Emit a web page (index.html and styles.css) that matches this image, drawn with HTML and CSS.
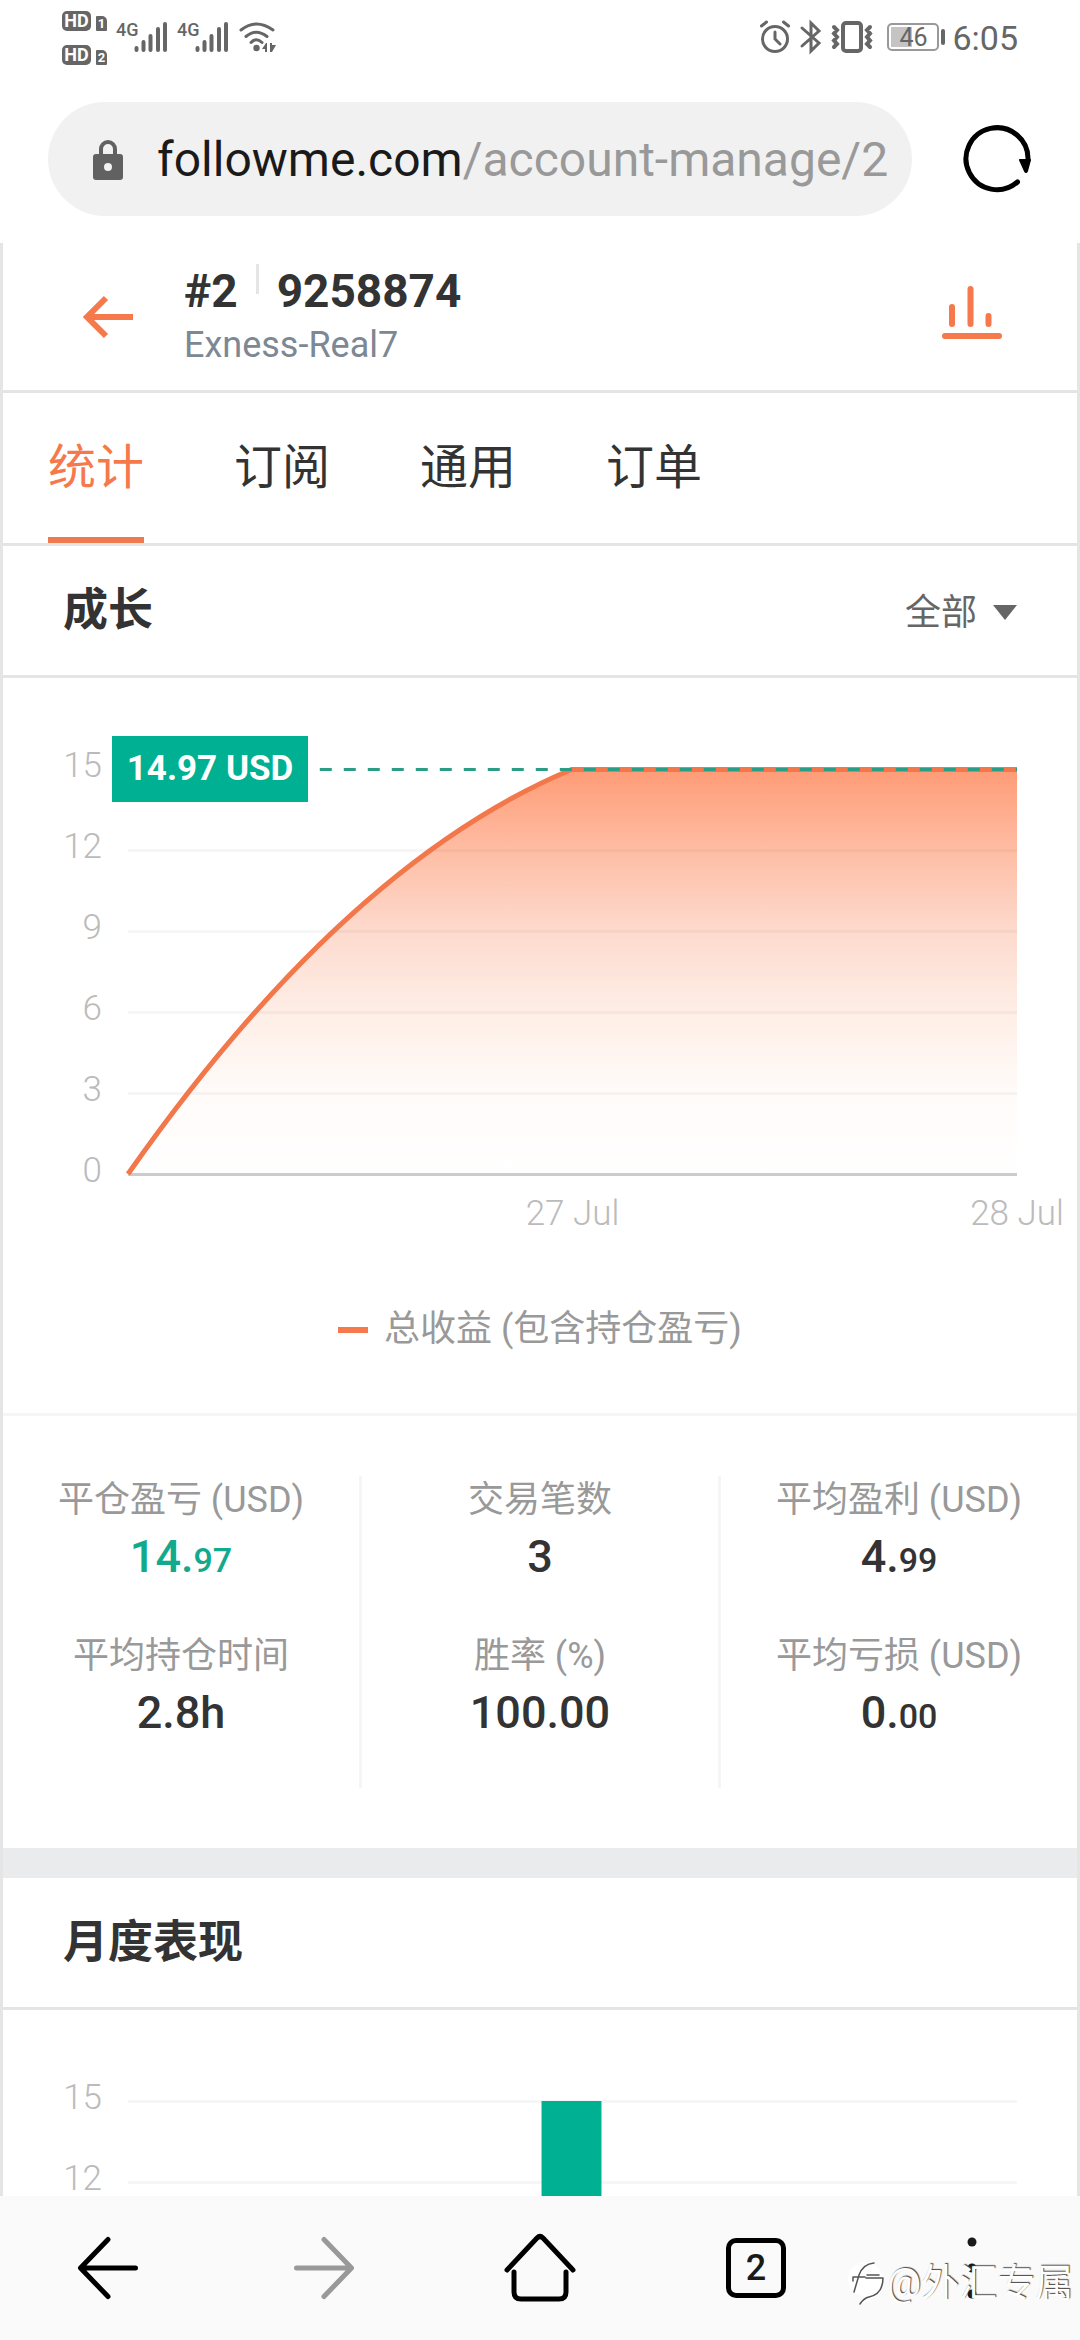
FILE: index.html
```html
<!DOCTYPE html>
<html lang="zh-CN">
<head>
<meta charset="utf-8">
<meta name="viewport" content="width=device-width">
<title>#2 9258874</title>
<link rel="stylesheet" href="styles.css">
</head>
<body>
<header class="status">
  <div class="status-side">
    <div class="hd-list">
      <div class="hd"><b class="hd-tag">HD</b><b class="hd-sim">1</b></div>
      <div class="hd"><b class="hd-tag">HD</b><b class="hd-sim">2</b></div>
    </div>
    <div class="cell"><b class="cell-net">4G</b>
      <svg class="cell-bars" width="34" height="32" viewBox="0 0 34 32"><path d="M2.500 27v2M9.500 21v8M16.500 15v14M24 8v21M31 3v26"/></svg></div>
    <div class="cell"><b class="cell-net">4G</b>
      <svg class="cell-bars" width="34" height="32" viewBox="0 0 34 32"><path d="M2.500 27v2M9.500 21v8M16.500 15v14M24 8v21M31 3v26"/></svg></div>
    <svg class="wifi" width="40" height="32" viewBox="0 0 40 32"><path d="M3 9Q18-3 35 9M8 15.500Q18 7 29 15.500M13 21.500Q18 16 24 21.500"/><circle cx="18.500" cy="27" r="3.200"/><path class="solid" d="M24 28l4-6h1v9h-2v-3zM32 22v9h2l4-7h-4v-2z"/></svg>
  </div>
  <div class="status-side status-right">
    <svg class="line-icon alarm" width="30" height="32" viewBox="0 0 30 32"><circle cx="15" cy="18" r="12.500"/><path d="M15 11v7l5 5M1.500 5l5-4M28.500 5l-5-4"/></svg>
    <svg class="line-icon thin" width="20" height="32" viewBox="0 0 20 32"><path d="M1 7l17 15-8 8V2l8 8L1 25"/></svg>
    <svg class="line-icon" width="40" height="32" viewBox="0 0 40 32"><rect x="11" y="2" width="18" height="28" rx="3"/><path d="M2 6l3 3-3 3.500 3 3.500-3 3.500 3 3.500-3 3M38 6l-3 3 3 3.500-3 3.500 3 3.500-3 3.500 3 3"/></svg>
    <div class="battery"><span>46</span></div>
    <time class="clock">6:05</time>
  </div>
</header>

<div class="toolbar">
  <button class="address" type="button">
    <svg width="30" height="42" viewBox="0 0 30 42"><path d="M3 16h3V11a9 9 0 0 1 18 0v5h3a3 3 0 0 1 3 3v20a3 3 0 0 1-3 3H3a3 3 0 0 1-3-3V19a3 3 0 0 1 3-3zM10 16h10V11a5 5 0 0 0-10 0zM15 25a4 4 0 1 0 0 8 4 4 0 1 0 0-8z" fill="#616161" fill-rule="evenodd"/></svg>
    <span class="url"><span class="host">followme.com</span>/account-manage/2</span>
  </button>
  <button class="icon-button" type="button" aria-label="刷新">
    <svg width="68" height="68" viewBox="0 0 68 68"><path d="M54.500 57A31 31 0 1 1 65 35" fill="none" stroke="#000" stroke-width="5" stroke-linecap="round"/><path d="M57 35h10l-3 11q-1 2-2 0z" stroke="#000" stroke-width="2" stroke-linejoin="round"/></svg>
  </button>
</div>

<main class="page">
  <div class="account">
    <button class="icon-button" type="button" aria-label="返回">
      <svg width="50" height="42" viewBox="0 0 50 42"><path d="M49 21H4M22 2L3 21l19 19" fill="none" stroke="#f5794a" stroke-width="6"/></svg>
    </button>
    <div class="account-name">
      <h1><span>#2</span><i class="rule"></i><span>9258874</span></h1>
      <p>Exness-Real7</p>
    </div>
    <button class="icon-button" type="button" aria-label="图表">
      <svg width="60" height="64" viewBox="0 0 60 64"><path d="M3 51h54M10 22v17M28.500 4v35M46.500 31v8" fill="none" stroke="#f5794a" stroke-width="6" stroke-linecap="round"/></svg>
    </button>
  </div>
  <nav class="tabs">
    <a class="tab active" href="#stats">统计</a>
    <a class="tab" href="#subscribe">订阅</a>
    <a class="tab" href="#general">通用</a>
    <a class="tab" href="#orders">订单</a>
  </nav>

  <section>
    <div class="section-head">
      <h2>成长</h2>
      <div class="range">
        <select aria-label="时间范围"><option>全部</option></select>
        <svg width="24" height="15" viewBox="0 0 24 15"><path d="M0 0h24L12 15z" fill="#666"/></svg>
      </div>
    </div>
    <div class="chart">
      <div class="y-axis"><span>15</span><span>12</span><span>9</span><span>6</span><span>3</span><span>0</span></div>
      <div class="plot">
        <svg class="plot-svg" viewBox="0 0 890 408" preserveAspectRatio="none">
          <defs><linearGradient id="fade" x1="0" y1="0" x2="0" y2="1"><stop offset="0" stop-color="#ff9b76"/><stop offset=".2" stop-color="#febda4"/><stop offset=".4" stop-color="#fddace"/><stop offset=".6" stop-color="#feeee6"/><stop offset=".8" stop-color="#fffbf9"/><stop offset="1" stop-color="#fff"/></linearGradient></defs>
          <path d="M0 406Q218 96 444 1.500H890V406z" fill="url(#fade)"/>
          <path class="grid" d="M0 82.500h890M0 163.500h890M0 244.500h890M0 325.500h890"/>
          <path class="base" d="M0 406.500h890"/>
          <path class="profit" d="M0 406Q218 96 444 1.500H890"/>
          <path class="current" d="M192 1.500H890"/>
        </svg>
        <div class="flag">14.97 USD</div>
        <div class="x-axis"><span></span><span>27 Jul</span><span>28 Jul</span></div>
      </div>
    </div>
    <div class="legend"><i></i>总收益 (包含持仓盈亏)</div>
    <div class="stats">
      <dl>
        <dt>平仓盈亏 (USD)</dt><dd class="gain">14.<small>97</small></dd>
        <dt>平均持仓时间</dt><dd>2.8h</dd>
      </dl>
      <dl>
        <dt>交易笔数</dt><dd>3</dd>
        <dt>胜率 (%)</dt><dd>100.00</dd>
      </dl>
      <dl>
        <dt>平均盈利 (USD)</dt><dd>4.<small>99</small></dd>
        <dt>平均亏损 (USD)</dt><dd>0.<small>00</small></dd>
      </dl>
    </div>
  </section>

  <section class="monthly">
    <div class="section-head"><h2>月度表现</h2></div>
    <div class="chart">
      <div class="y-axis"><span>15</span><span>12</span></div>
      <div class="plot">
        <svg class="plot-svg" viewBox="0 0 890 408" preserveAspectRatio="none">
          <path class="grid" d="M0 1.500h890M0 82.500h890M0 163.500h890M0 244.500h890M0 325.500h890"/>
          <path d="M414 1h60v405h-60z" fill="#00b093"/>
        </svg>
      </div>
    </div>
  </section>
</main>

<nav class="browser-nav">
  <button type="button" aria-label="后退"><svg width="60" height="62" viewBox="0 0 60 62"><path d="M57.500 31H4M30 2.500L2.500 31 30 59.500"/></svg></button>
  <button type="button" aria-label="前进" class="dim"><svg width="60" height="62" viewBox="0 0 60 62"><path d="M2.500 31H56M30 2.500L57.500 31 30 59.500"/></svg></button>
  <button type="button" aria-label="主页"><svg width="72" height="68" viewBox="0 0 72 68"><path d="M3 36L33 4q3-3 6 0L69 36M10 38v20q0 7 7 7h38q7 0 7-7V38"/></svg></button>
  <button type="button" aria-label="标签页"><span class="tab-count">2</span></button>
  <button type="button" aria-label="更多"><svg class="dots" width="10" height="62" viewBox="0 0 10 62"><circle cx="5" cy="5" r="4.500"/><circle cx="5" cy="31" r="4.500"/><circle cx="5" cy="57" r="4.500"/></svg></button>
  <div class="watermark">
    <svg width="38" height="44" viewBox="0 0 38 44"><path d="M18 1a17 17 0 1 0 0 34l-6 8q22-4 24-24A18 18 0 0 0 18 1z" fill="#fff"/><path d="M7 31l5-17q4-11 15-12M6 20v-4h12M20 14h12M19 17h17q0 16-14 19-5 1-9 7" fill="none" stroke="#555" stroke-width="1.500"/></svg>
    <span>@外汇专属</span>
  </div>
</nav>
</body>
</html>
```

FILE: styles.css
```css
* { box-sizing: border-box; margin: 0; padding: 0; }

body {
  display: flex;
  flex-direction: column;
  height: 100vh;
  background: #fff;
  color: #333;
  font-family: Roboto, "Noto Sans CJK SC", sans-serif;
  font-size: 36px;
}

button, select { border: 0; background: none; color: inherit; font: inherit; appearance: none; }
svg { display: block; flex: none; overflow: visible; }

/* phone status bar */
.status {
  display: flex;
  justify-content: space-between;
  height: 102px;
  padding: 11px 62px 0;
  color: #666;
}
.status-side { display: flex; gap: 9px; }
.status-right { gap: 11px; padding-top: 10px; }
.hd-list { display: grid; align-content: start; gap: 14px; }
.hd { display: flex; align-items: flex-end; gap: 5px; height: 20px; }
.hd-tag, .hd-sim { background: #666; color: #fff; text-align: center; }
.hd-tag { width: 29px; border-radius: 5px; font-size: 18px; line-height: 20px; }
.hd-sim { width: 11px; border-radius: 1px 5px 1px 1px; font-size: 13px; line-height: 15px; }
.cell { display: flex; padding-top: 10px; }
.cell-net { width: 18px; font-size: 18px; font-weight: 500; line-height: 18px; }
.cell-bars { fill: none; stroke: #666; stroke-width: 4; stroke-linecap: round; }
.wifi { margin-top: 10px; fill: none; stroke: #666; stroke-width: 3; stroke-linecap: round; }
.wifi circle, .wifi .solid { fill: #666; stroke: none; }
.line-icon { fill: none; stroke: #666; stroke-width: 4; stroke-linecap: round; }
.line-icon.alarm, .line-icon.thin { stroke-width: 3; }
.battery {
  position: relative;
  width: 52px;
  height: 28px;
  margin: 2px 2px 0 4px;
  border: 2px solid #999;
  border-radius: 5px;
  background: linear-gradient(#c4c4c4, #c4c4c4) 2px 2px / 21px 20px no-repeat;
  font-size: 25px;
  line-height: 25px;
  text-align: center;
}
.battery::after {
  content: "";
  position: absolute;
  top: 4px;
  right: -8px;
  width: 4px;
  height: 16px;
  border-radius: 2px;
  background: #666;
}
.clock { font-size: 34px; line-height: 34px; }

/* browser address bar */
.toolbar {
  display: flex;
  align-items: center;
  gap: 51px;
  padding: 0 49px 27px 48px;
}
.address {
  display: flex;
  flex: 1;
  align-items: center;
  gap: 34px;
  min-width: 0;
  height: 114px;
  padding: 0 20px 0 45px;
  border-radius: 57px;
  background: #f1f1f1;
}
.url { overflow: hidden; color: #999; font-size: 48px; white-space: nowrap; }
.host { color: #1a1a1a; }

/* web page */
.page {
  flex: 1;
  min-height: 0;
  overflow: hidden;
  border: solid #e5e5e5;
  border-width: 0 3px;
}
.account {
  display: flex;
  align-items: center;
  height: 150px;
  padding: 0 75px 0 81px;
  border-bottom: 3px solid #e5e5e5;
}
.account-name { flex: 1; padding-left: 50px; }
.account h1 { display: flex; margin-bottom: 2px; font-size: 46px; line-height: 54px; }
.account p { color: #7c8894; line-height: 50px; }
.rule { width: 3px; height: 30px; margin: 0 18px; background: #e5e5e5; }

.tabs {
  display: flex;
  gap: 90px;
  padding: 0 45px;
  border-bottom: 3px solid #e5e5e5;
}
.tab {
  height: 150px;
  padding-top: 6px;
  border-bottom: 6px solid transparent;
  color: inherit;
  font-size: 48px;
  line-height: 138px;
  text-decoration: none;
}
.tab.active { border-color: #ee7a50; color: #f5794a; }

.section-head {
  display: flex;
  align-items: center;
  justify-content: space-between;
  height: 132px;
  padding: 0 60px;
  border-bottom: 3px solid #e5e5e5;
}
h2 { padding-bottom: 8px; font-size: 45px; }
.range { display: flex; align-items: center; gap: 15px; padding-top: 4px; color: #666; }

.chart {
  display: flex;
  gap: 26px;
  padding: 47px 60px 0 0;
  color: #bbb;
  font-weight: 300;
}
.y-axis {
  display: grid;
  align-content: start;
  width: 99px;
  font-size: 35px;
  line-height: 81px;
  text-align: right;
}
.plot { position: relative; flex: 1; padding-top: 43px; }
.plot-svg { width: 100%; height: 408px; fill: none; }
.plot-svg path { vector-effect: non-scaling-stroke; }
.grid { stroke: rgba(0, 0, 0, 0.035); stroke-width: 3; }
.base { stroke: #ccc; stroke-width: 3; }
.profit { stroke: #f2784b; stroke-width: 5; }
.current { stroke: #2a9d84; stroke-width: 3; stroke-dasharray: 12 12; }
.flag {
  position: absolute;
  top: 11px;
  left: -16px;
  width: 196px;
  background: #00b093;
  color: #fff;
  font-size: 35px;
  font-weight: 700;
  line-height: 66px;
  text-align: center;
}
.x-axis { display: flex; justify-content: space-between; padding-top: 20px; font-size: 35px; line-height: 36px; }
.x-axis span { display: flex; justify-content: center; width: 0; white-space: nowrap; }

.legend {
  display: flex;
  align-items: center;
  justify-content: center;
  gap: 16px;
  padding: 75px 0 61px;
  border-bottom: 3px solid #f5f5f5;
  color: #999;
  line-height: 45px;
}
.legend i { width: 30px; height: 6px; background: #f5794a; }

.stats { display: flex; padding: 60px 0; text-align: center; }
.stats dl { flex: 1; border-right: 3px solid #f5f5f5; }
.stats dl:last-child { border: 0; }
.stats dt { padding-top: 2px; color: #999; line-height: 45px; }
.stats dd { height: 109px; font-size: 45px; font-weight: 500; line-height: 68px; }
.stats dd.gain { color: #12a98c; }
.stats small { font-size: 34px; }

.monthly { border-top: 30px solid #eaebed; }

/* browser bottom bar */
.browser-nav {
  position: relative;
  display: flex;
  height: 144px;
  background: #fafafa;
}
.browser-nav button { display: flex; flex: 1; align-items: center; justify-content: center; }
.browser-nav svg { fill: none; stroke: #000; stroke-width: 5; stroke-linecap: round; stroke-linejoin: round; }
.browser-nav .dim svg { stroke: #999; }
.browser-nav .dots { fill: #1a1a1a; stroke: none; }
.tab-count {
  width: 60px;
  height: 60px;
  border: 5px solid #000;
  border-radius: 10px;
  font-weight: 500;
  color: #1a1a1a;
  line-height: 50px;
}
.watermark {
  position: absolute;
  right: 7px;
  bottom: 30px;
  display: flex;
  align-items: center;
  gap: 2px;
  color: #fff;
  font-size: 38px;
  line-height: 54px;
  text-shadow: 1px -1px 1px #444;
}
.watermark svg { stroke: none; }
```
